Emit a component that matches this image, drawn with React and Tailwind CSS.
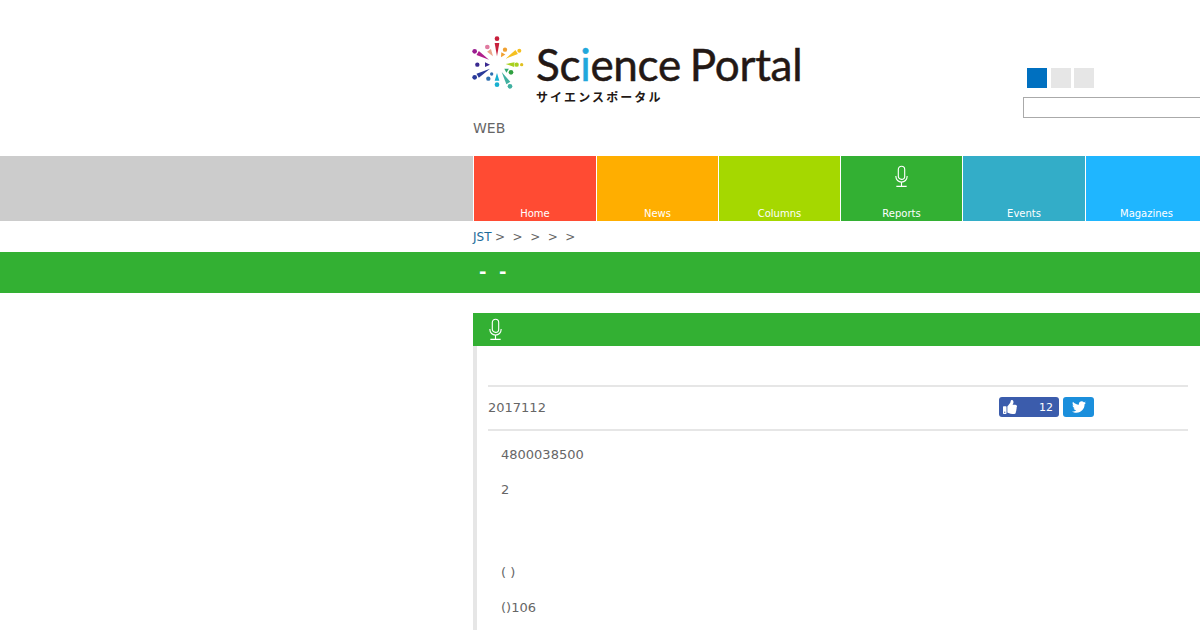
import { FaThumbsUp, FaTwitter } from "react-icons/fa";

const TABS = [
  { label: "Home", color: "bg-[#ff4b33]", width: "w-[123px]" },
  { label: "News", color: "bg-[#ffae00]", width: "w-[122px]" },
  { label: "Columns", color: "bg-[#a5d800]", width: "w-[122px]" },
  { label: "Reports", color: "bg-[#33b033]", width: "w-[122px]", icon: true },
  { label: "Events", color: "bg-[#33adc8]", width: "w-[123px]" },
  { label: "Magazines", color: "bg-[#1fb6ff]", width: "w-[122px]" },
];

// x1,y1 = inner point, x2,y2 = outer point, in 195 unit box
const WEDGES = [
  ["#c8203c", 96, 85, 96, 45],
  ["#e9a58a", 84, 85, 72, 67],
  ["#f0a030", 108, 88, 115, 76],
  ["#f5c020", 122, 92, 155, 72],
  ["#b01e8c", 72, 95, 38, 75],
  ["#a8d020", 122, 108, 148, 110],
  ["#3a2a90", 75, 110, 60, 110],
  ["#2a3a9a", 75, 122, 38, 143],
  ["#18b0d0", 96, 135, 96, 158],
  ["#40b0a0", 110, 132, 130, 165],
  ["#30a870", 118, 122, 128, 128],
];

const DOTS = [
  ["#c8203c", 96, 32, 7],
  ["#e07aa0", 67, 57, 7],
  ["#f0a030", 120, 65, 6.5],
  ["#f5c020", 163, 68, 6],
  ["#9a1e90", 29, 70, 7],
  ["#a8d020", 155, 110, 6.5],
  ["#e0c020", 170, 110, 5],
  ["#3a2a90", 37, 110, 6.5],
  ["#30a040", 138, 133, 7],
  ["#2a3a9a", 29, 148, 7],
  ["#3070b0", 70, 152, 6.5],
  ["#3070b0", 80, 138, 5],
  ["#18b0d0", 96, 170, 7],
  ["#40b0a0", 135, 175, 7],
];

function Burst() {
  return (
    <svg width="65" height="65" viewBox="0 0 195 195">
      {WEDGES.map(([c, x1, y1, x2, y2]) => {
        const dx = x2 - x1;
        const dy = y2 - y1;
        const len = Math.hypot(dx, dy);
        const nx = (-dy / len) * 7;
        const ny = (dx / len) * 7;
        return (
          <polygon
            key={`${x1}-${y1}`}
            fill={c}
            points={`${x1},${y1} ${x2 + nx},${y2 + ny} ${x2 - nx},${y2 - ny}`}
          />
        );
      })}
      {DOTS.map(([c, cx, cy, r]) => (
        <circle key={`${cx}-${cy}`} cx={cx} cy={cy} r={r} fill={c} />
      ))}
    </svg>
  );
}

function Mic({ className }) {
  return (
    <svg className={className} viewBox="0 0 16 24" fill="none" stroke="currentColor" strokeWidth="1.2">
      <rect x="4.6" y="1" width="6.8" height="14" rx="3.4" />
      <path d="M2 11.5v.5a6 6 0 0 0 12 0v-.5M8 18v4.5M2.5 22.5h11" />
    </svg>
  );
}

export default function App() {
  return (
    <div className="h-[630px] w-[1200px] overflow-hidden bg-white font-['DejaVu_Sans',sans-serif] text-[#666]">
      <header className="flex h-[156px]">
        <div className="ml-[473px] w-[550px] shrink-0 pt-[36px]">
          <div className="flex">
            <div className="-ml-2 -mt-2">
              <Burst />
            </div>
            <div className="ml-[6px]">
              <div className="mt-[5px] whitespace-nowrap font-['Lato',sans-serif] text-[44px] leading-[46px] tracking-[-0.3px] text-[#231815] [-webkit-text-stroke:0.5px_#231815] [word-spacing:-2px]">
                Sc
                <span className="text-[#1fa8dc] [-webkit-text-stroke:0.5px_#1fa8dc]">i</span>ence Portal
              </div>
              <div className="mt-[3px] font-['Noto_Sans_CJK_JP',sans-serif] text-[12px] font-bold leading-[14px] tracking-[2.1px] text-[#231815]">
                サイエンスポータル
              </div>
            </div>
          </div>
          <p className="mt-[14px] text-sm leading-[20px]">WEB</p>
        </div>
        <div className="shrink-0 pt-[68px]">
          <div className="ml-1 flex gap-1">
            <span className="h-5 w-5 bg-[#0070c0]" />
            <span className="h-5 w-5 bg-[#e6e6e6]" />
            <span className="-ml-px h-5 w-5 bg-[#e6e6e6]" />
          </div>
          <input className="mt-[9px] block h-[21px] w-[220px] border border-[#aaa] bg-white" />
        </div>
      </header>

      <nav className="flex h-[65px] bg-[#ccc] pl-[473px]">
        {TABS.map((t) => (
          <div
            key={t.label}
            className={`relative shrink-0 border-l border-white ${t.color} ${t.width} text-center text-white`}
          >
            {t.icon && <Mic className="absolute left-[53px] top-[9px] h-[23px] w-[15px]" />}
            <span className="absolute inset-x-0 bottom-0 text-[10px] leading-[14px]">{t.label}</span>
          </div>
        ))}
      </nav>

      <div className="flex h-[31px] items-center gap-[7.5px] pl-[473px] text-[12px]">
        <span className="text-[#1a6a9a]">JST</span>
        <span className="-ml-[4px]">&gt;</span>
        <span>&gt;</span>
        <span>&gt;</span>
        <span>&gt;</span>
        <span>&gt;</span>
      </div>

      <div className="flex h-[41px] items-center gap-[12.5px] bg-[#33b033] pb-[2px] pl-[479px] text-lg font-bold text-white">
        <span>-</span>
        <span>-</span>
      </div>

      <main className="ml-[473px] mt-5 w-[727px]">
        <div className="flex h-[33px] items-center bg-[#33b033] pl-[15px] text-white">
          <Mic className="h-[23px] w-[15px]" />
        </div>
        <div className="h-[300px] border-l-4 border-[#e6e6e6] pl-[11px] pr-3 text-[13px]">
          <div className="h-[41px] border-b-2 border-[#e6e6e6]" />
          <div className="flex h-[44px] items-center border-b-2 border-[#e6e6e6] pb-[2px]">
            <span className="mt-[2px] w-[511px]">2017112</span>
            <div className="flex gap-1">
              <div className="flex h-5 w-[60px] items-center justify-between rounded-[3px] bg-[#3b5cac] pl-[4px] pr-[6px] text-[11px] leading-5 text-white">
                <FaThumbsUp size={14} />
                <span className="pt-[2px]">12</span>
              </div>
              <div className="flex h-5 w-[31px] items-center justify-center rounded-[3px] bg-[#1b8fdc] text-white">
                <FaTwitter size={14} />
              </div>
            </div>
          </div>
          <div className="pl-[13px] pt-[15px]">
            <p className="h-[35px] leading-[18px]">4800038500</p>
            <p className="h-[83px] leading-[18px]">2</p>
            <p className="h-[35px] leading-[18px]">( )</p>
            <p className="leading-[18px]">()106</p>
          </div>
        </div>
      </main>
    </div>
  );
}
